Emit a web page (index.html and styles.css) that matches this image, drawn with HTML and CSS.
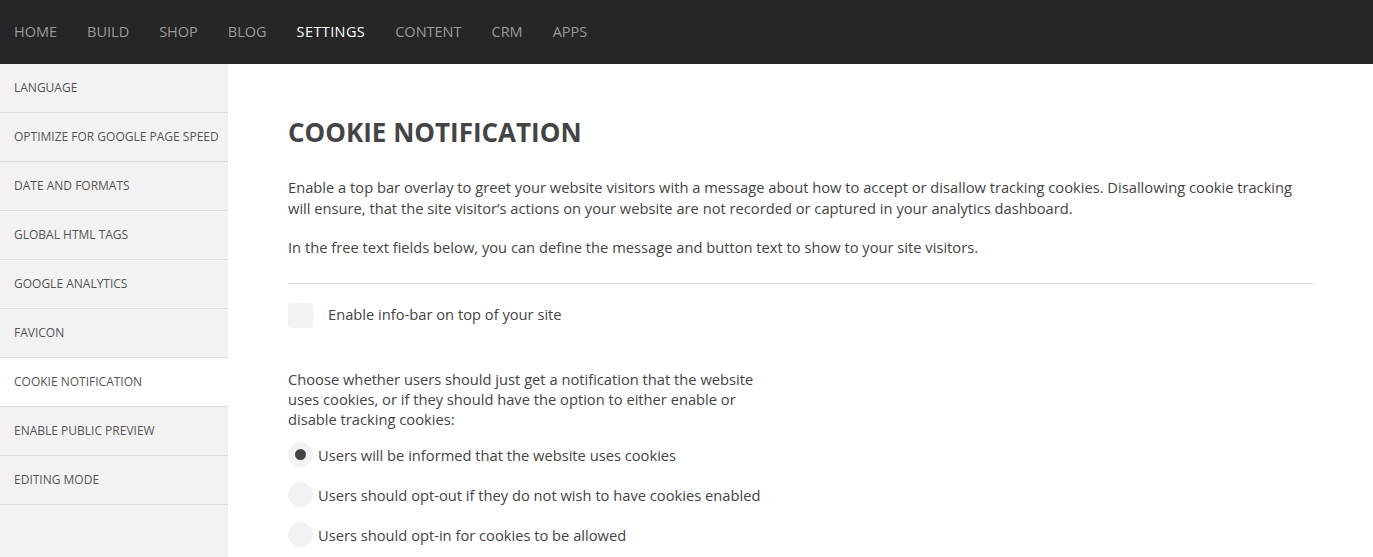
FILE: index.html
```html
<!DOCTYPE html>
<html lang="en">
<head>
    <meta charset="UTF-8">
    <title>Settings - Cookie Notification</title>
    <link rel="stylesheet" href="styles.css">
</head>
<body>
    <nav class="topnav">
        <a href="#">HOME</a>
        <a href="#">BUILD</a>
        <a href="#">SHOP</a>
        <a href="#">BLOG</a>
        <a href="#" class="active">SETTINGS</a>
        <a href="#">CONTENT</a>
        <a href="#">CRM</a>
        <a href="#">APPS</a>
    </nav>

    <div class="layout">
        <aside class="sidebar">
            <a href="#">LANGUAGE</a>
            <a href="#">OPTIMIZE FOR GOOGLE PAGE SPEED</a>
            <a href="#">DATE AND FORMATS</a>
            <a href="#">GLOBAL HTML TAGS</a>
            <a href="#">GOOGLE ANALYTICS</a>
            <a href="#">FAVICON</a>
            <a href="#" class="active">COOKIE NOTIFICATION</a>
            <a href="#">ENABLE PUBLIC PREVIEW</a>
            <a href="#">EDITING MODE</a>
        </aside>

        <main class="content">
            <h1>COOKIE NOTIFICATION</h1>
            <p>Enable a top bar overlay to greet your website visitors with a message about how to accept or disallow tracking cookies. Disallowing cookie tracking will ensure, that the site visitor’s actions on your website are not recorded or captured in your analytics dashboard.</p>
            <p>In the free text fields below, you can define the message and button text to show to your site visitors.</p>
            <hr>

            <label class="check-row">
                <span class="checkbox"></span>
                <span class="check-text">Enable info-bar on top of your site</span>
            </label>

            <p class="choose">Choose whether users should just get a notification that the website uses cookies, or if they should have the option to either enable or disable tracking cookies:</p>

            <div class="radios">
                <label class="radio-row"><span class="radio checked"></span>Users will be informed that the website uses cookies</label>
                <label class="radio-row"><span class="radio"></span>Users should opt-out if they do not wish to have cookies enabled</label>
                <label class="radio-row"><span class="radio"></span>Users should opt-in for cookies to be allowed</label>
            </div>
        </main>
    </div>
</body>
</html>
```

FILE: styles.css
```css
body {
    margin: 0;
    font-family: 'Open Sans', 'Lato', sans-serif;
    color: #444;
    background: #fff;
}
a {
    text-decoration: none;
}
.topnav {
    height: 64px;
    background-color: #262626;
    display: flex;
    align-items: center;
    padding-left: 14px;
    padding-bottom: 2px;
    box-sizing: border-box;
    gap: 30px;
}
.topnav a {
    color: #9a9a9a;
    font-size: 14.5px;
}
.topnav a.active {
    color: #fff;
    letter-spacing: 0.4px;
}
.layout {
    display: flex;
    min-height: 493px;
}
.sidebar {
    width: 228px;
    flex-shrink: 0;
    background-color: #f2f2f2;
    display: flex;
    flex-direction: column;
}
.sidebar a {
    height: 47px;
    padding-bottom: 1px;
    border-bottom: 1px solid #ddd;
    display: flex;
    align-items: center;
    padding-left: 14px;
    font-size: 12px;
    color: #555;
}
.sidebar a.active {
    background-color: #fff;
}
.content {
    flex: 1;
    padding: 48px 59px 0 60px;
}
h1 {
    margin: 0 0 25px;
    font-size: 26px;
    line-height: 40px;
    font-weight: bold;
    color: #444;
}
p {
    margin: 0 0 18px;
    font-size: 14.7px;
    line-height: 21px;
    color: #444;
}
hr {
    border: none;
    border-top: 1px solid #ddd;
    margin: 25px 0 19px;
}
.check-row {
    display: flex;
    align-items: center;
    gap: 15px;
    font-size: 14.7px;
}
.check-text {
    padding-bottom: 3px;
}
.checkbox {
    width: 25px;
    height: 25px;
    border-radius: 3px;
    background-color: #f2f2f2;
}
.choose {
    max-width: 480px;
    line-height: 20px;
    margin-top: 41px;
    margin-bottom: 13px;
}
.radios {
    display: flex;
    flex-direction: column;
    gap: 15px;
}
.radio-row {
    display: flex;
    align-items: center;
    gap: 5px;
    font-size: 14.7px;
}
.radio {
    width: 25px;
    height: 25px;
    border-radius: 50%;
    background-color: #f2f2f2;
    display: flex;
    align-items: center;
    justify-content: center;
}
.radio.checked::after {
    content: '';
    width: 11px;
    height: 11px;
    border-radius: 50%;
    background-color: #444;
}
```
